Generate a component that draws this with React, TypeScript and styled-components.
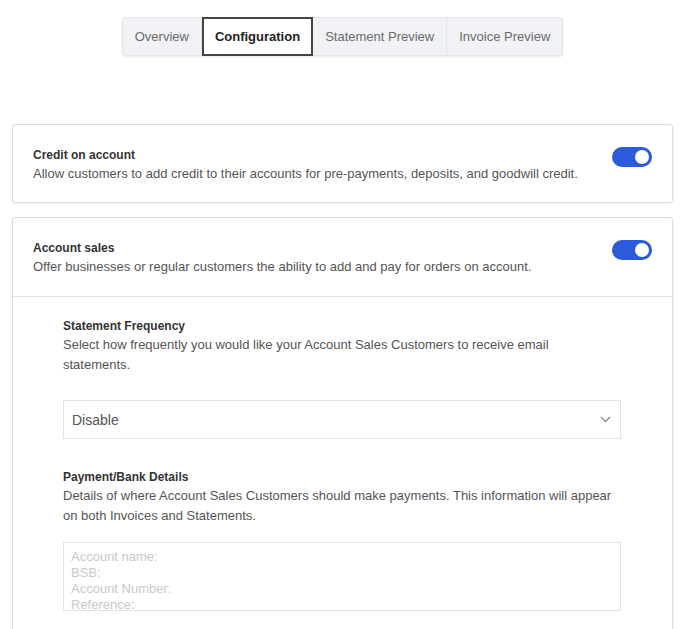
import React from 'react'
import styled, { createGlobalStyle } from 'styled-components'

const GlobalStyle = createGlobalStyle`
  body {
    margin: 0;
    background: #fff;
    font-family: "Liberation Sans", Arial, sans-serif;
    color: #333;
  }
`

const Page = styled.div`
  padding: 17px 12px 40px;
`

const TabBar = styled.div`
  display: flex;
  justify-content: center;
  margin-bottom: 68px;
`

const TabGroup = styled.div`
  display: flex;
  border-radius: 3px;
  box-shadow: 0 1px 2px rgba(0, 0, 0, 0.08);
`

const Tab = styled.button<{ $active?: boolean }>`
  height: 39px;
  padding: 0 ${p => (p.$active ? 11 : 12)}px;
  font-family: inherit;
  font-size: 13px;
  font-weight: ${p => (p.$active ? 700 : 400)};
  color: ${p => (p.$active ? '#222' : '#6b6b6b')};
  background: ${p => (p.$active ? '#fff' : '#f0f2f5')};
  border: ${p => (p.$active ? '2px solid #444' : '1px solid #e1e4e8')};
  border-left-width: ${p => (p.$active ? '2px' : '0')};
  cursor: pointer;
  &:first-child {
    border-left-width: 1px;
    border-radius: 3px 0 0 3px;
  }
  &:last-child {
    border-radius: 0 3px 3px 0;
  }
`

const Card = styled.section`
  border: 1px solid #dcdcdc;
  border-radius: 3px;
  box-shadow: 0 1px 3px rgba(0, 0, 0, 0.06);
  background: #fff;
  & + & {
    margin-top: 14px;
  }
`

const CardHeader = styled.div<{ $bottom?: number }>`
  display: flex;
  align-items: flex-start;
  justify-content: space-between;
  padding: 22px 20px ${p => p.$bottom ?? 18}px;
`

const HeaderText = styled.div`
  display: flex;
  flex-direction: column;
`

const Title = styled.div`
  font-size: 12px;
  font-weight: 700;
  line-height: 16px;
  color: #333;
`

const Description = styled.div`
  font-size: 13px;
  line-height: 20px;
  color: #555;
  margin-top: 1px;
`

const Toggle = styled.div<{ $on?: boolean }>`
  flex: none;
  width: 40px;
  height: 20px;
  border-radius: 10px;
  background: ${p => (p.$on ? '#2b5bd8' : '#ccc')};
  display: flex;
  align-items: center;
  justify-content: ${p => (p.$on ? 'flex-end' : 'flex-start')};
  padding: 0 3px;
  box-sizing: border-box;
  &::after {
    content: '';
    width: 14px;
    height: 14px;
    border-radius: 50%;
    background: #fff;
  }
`

const CardBody = styled.div`
  border-top: 1px solid #e3e3e3;
  padding: 21px 51px 40px 50px;
`

const Field = styled.div<{ $gap?: number }>`
  margin-top: ${p => p.$gap ?? 0}px;
`

const Select = styled.div`
  margin-top: 25px;
  height: 39px;
  border: 1px solid #e2e2e2;
  box-sizing: border-box;
  display: flex;
  align-items: center;
  justify-content: space-between;
  padding: 0 9px 0 8px;
  font-size: 14px;
  color: #555;
`

const TextArea = styled.textarea`
  display: block;
  margin-top: 16px;
  width: 100%;
  height: 69px;
  box-sizing: border-box;
  border: 1px solid #e2e2e2;
  padding: 6px 7px;
  font-family: inherit;
  font-size: 13px;
  line-height: 16px;
  resize: none;
  overflow: hidden;
  &::placeholder {
    color: #c9c9c9;
  }
`

const Chevron = () => (
  <svg width="11" height="7" viewBox="0 0 11 7" fill="none">
    <path d="M1 1l4.5 4.5L10 1" stroke="#8a8a8a" strokeWidth="1.3" />
  </svg>
)

export default function App() {
  return (
    <Page>
      <GlobalStyle />
      <TabBar>
        <TabGroup>
          <Tab>Overview</Tab>
          <Tab $active>Configuration</Tab>
          <Tab>Statement Preview</Tab>
          <Tab>Invoice Preview</Tab>
        </TabGroup>
      </TabBar>

      <Card>
        <CardHeader>
          <HeaderText>
            <Title>Credit on account</Title>
            <Description>
              Allow customers to add credit to their accounts for pre-payments, deposits, and goodwill credit.
            </Description>
          </HeaderText>
          <Toggle $on />
        </CardHeader>
      </Card>

      <Card>
        <CardHeader $bottom={19}>
          <HeaderText>
            <Title>Account sales</Title>
            <Description>
              Offer businesses or regular customers the ability to add and pay for orders on account.
            </Description>
          </HeaderText>
          <Toggle $on />
        </CardHeader>
        <CardBody>
          <Field>
            <Title>Statement Frequency</Title>
            <Description>
              Select how frequently you would like your Account Sales Customers to receive email
              <br />
              statements.
            </Description>
            <Select>
              <span>Disable</span>
              <Chevron />
            </Select>
          </Field>
          <Field $gap={30}>
            <Title>Payment/Bank Details</Title>
            <Description>
              Details of where Account Sales Customers should make payments. This information will appear on both
              Invoices and Statements.
            </Description>
            <TextArea placeholder={'Account name:\nBSB:\nAccount Number:\nReference:'} />
          </Field>
        </CardBody>
      </Card>
    </Page>
  )
}
